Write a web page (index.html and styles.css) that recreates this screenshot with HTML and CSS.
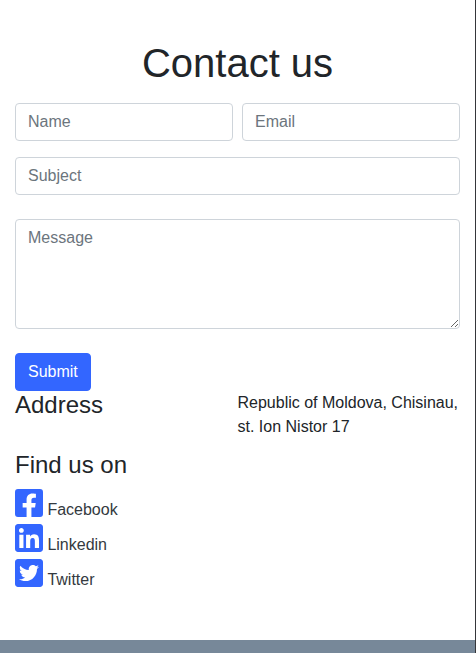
FILE: index.html
```html
<!DOCTYPE html>
<html lang="en">
<head>
<meta charset="utf-8">
<title>Contact us</title>
<link rel="stylesheet" href="styles.css">
</head>
<body>
<main class="contact">
  <h1 class="title">Contact us</h1>
  <form class="form">
    <div class="form-row">
      <input class="control" type="text" placeholder="Name">
      <input class="control" type="text" placeholder="Email">
    </div>
    <input class="control subject" type="text" placeholder="Subject">
    <textarea class="control message" placeholder="Message"></textarea>
    <button class="submit" type="button">Submit</button>
  </form>
  <section class="address">
    <h2 class="heading">Address</h2>
    <p class="address-text">Republic of Moldova, Chisinau, st. Ion Nistor 17</p>
  </section>
  <section class="social">
    <h2 class="heading">Find us on</h2>
    <a class="social-link"><svg class="icon" viewBox="0 0 448 448"><path d="M400 0H48A48 48 0 0 0 0 48v352a48 48 0 0 0 48 48h137.25V295.69h-63V224h63v-54.64c0-62.15 37-96.48 93.67-96.48 27.14 0 55.52 4.84 55.52 4.84v61h-31.27c-30.81 0-40.42 19.12-40.42 38.73V224h68.78l-11 71.69h-57.78V448H400a48 48 0 0 0 48-48V48a48 48 0 0 0-48-48z"/></svg><span>Facebook</span></a>
    <a class="social-link"><svg class="icon" viewBox="0 0 448 448"><path d="M400 0H48C21.500 0 0 21.500 0 48v352c0 26.500 21.500 48 48 48h352c26.500 0 48-21.500 48-48V48C448 21.500 426.500 0 400 0zM135.400 384H69V170.200h66.500V384zm-33.200-243c-21.300 0-38.500-17.300-38.500-38.500S80.900 64 102.200 64c21.200 0 38.500 17.300 38.500 38.500 0 21.300-17.200 38.500-38.500 38.500zm282.100 243h-66.400V280c0-24.800-.5-56.700-34.500-56.700-34.600 0-39.900 27-39.900 54.900V384h-66.400V170.200h63.700v29.200h.9c8.900-16.800 30.600-34.500 62.900-34.500 67.200 0 79.700 44.300 79.700 101.900V384z"/></svg><span>Linkedin</span></a>
    <a class="social-link"><svg class="icon" viewBox="0 0 448 448"><path d="M400 0H48C21.500 0 0 21.500 0 48v352c0 26.500 21.500 48 48 48h352c26.500 0 48-21.500 48-48V48c0-26.500-21.500-48-48-48zm-48.900 158.800c.2 2.800.2 5.700.2 8.500 0 86.700-66 186.600-186.600 186.600-37.200 0-71.700-10.800-100.700-29.400 5.300.6 10.400.8 15.800.8 30.700 0 58.900-10.400 81.400-28-28.800-.6-53-19.500-61.300-45.500 10.100 1.500 19.200 1.500 29.600-1.200-30-6.100-52.500-32.500-52.500-64.400v-.8c8.700 4.900 18.900 7.900 29.600 8.300a65.447 65.447 0 0 1-29.200-54.600c0-12.200 3.200-23.400 8.900-33.100 32.300 39.800 80.800 65.800 135.200 68.600-9.300-44.500 24-80.600 64-80.600 18.900 0 35.900 7.900 47.900 20.700 14.800-2.800 29-8.300 41.600-15.800-4.900 15.200-15.200 28-28.800 36.100 13.200-1.400 26-5.100 37.800-10.200-8.900 13.100-20.100 24.700-32.900 34z"/></svg><span>Twitter</span></a>
  </section>
</main>
<footer class="footer"></footer>
</body>
</html>
```
FILE: styles.css
```css
* { box-sizing: border-box; }
body {
  margin: 0;
  height: 653px;
  display: flex;
  flex-direction: column;
  overflow: hidden;
  background: #fff;
  border-right: 1px solid #35363a;
  color: #212529;
  font: 16px/24px "Liberation Sans", Arial, sans-serif;
}
h1, h2, p { margin: 0; font-weight: 400; }
.contact { height: 640px; flex: none; padding: 39px 15px 0; }
.title { font-size: 40px; line-height: 48px; text-align: center; }
.form { display: flex; flex-direction: column; align-items: flex-start; margin-top: 16px; }
.form-row { display: grid; grid-template-columns: 1fr 1fr; gap: 9px; width: 100%; }
.control {
  display: block;
  width: 100%;
  height: 38px;
  margin: 0;
  padding: 6px 12px;
  border: 1px solid #ced4da;
  border-radius: 4px;
  background: #fff;
  color: #495057;
  font: inherit;
}
.control::placeholder { color: #6c757d; opacity: 1; }
.subject { margin-top: 16px; }
.message { height: 110px; margin-top: 24px; resize: vertical; }
.submit {
  height: 38px;
  margin-top: 24px;
  padding: 6px 12px;
  border: 1px solid #3366ff;
  border-radius: 4px;
  background: #3366ff;
  color: #fff;
  font: inherit;
}
.address { display: grid; grid-template-columns: 1fr 1fr; height: 60px; }
.heading { font-size: 24px; line-height: 28.8px; }
.social { display: flex; flex-direction: column; align-items: flex-start; }
.social-link { display: flex; align-items: flex-start; gap: 4.4px; height: 35px; color: #343a40; }
.social .heading { margin-bottom: 9px; }
.social-link span { padding-top: 9px; }
.icon { width: 28px; height: 28px; fill: #3366ff; }
.footer { flex: 1; background: #778899; }
```
